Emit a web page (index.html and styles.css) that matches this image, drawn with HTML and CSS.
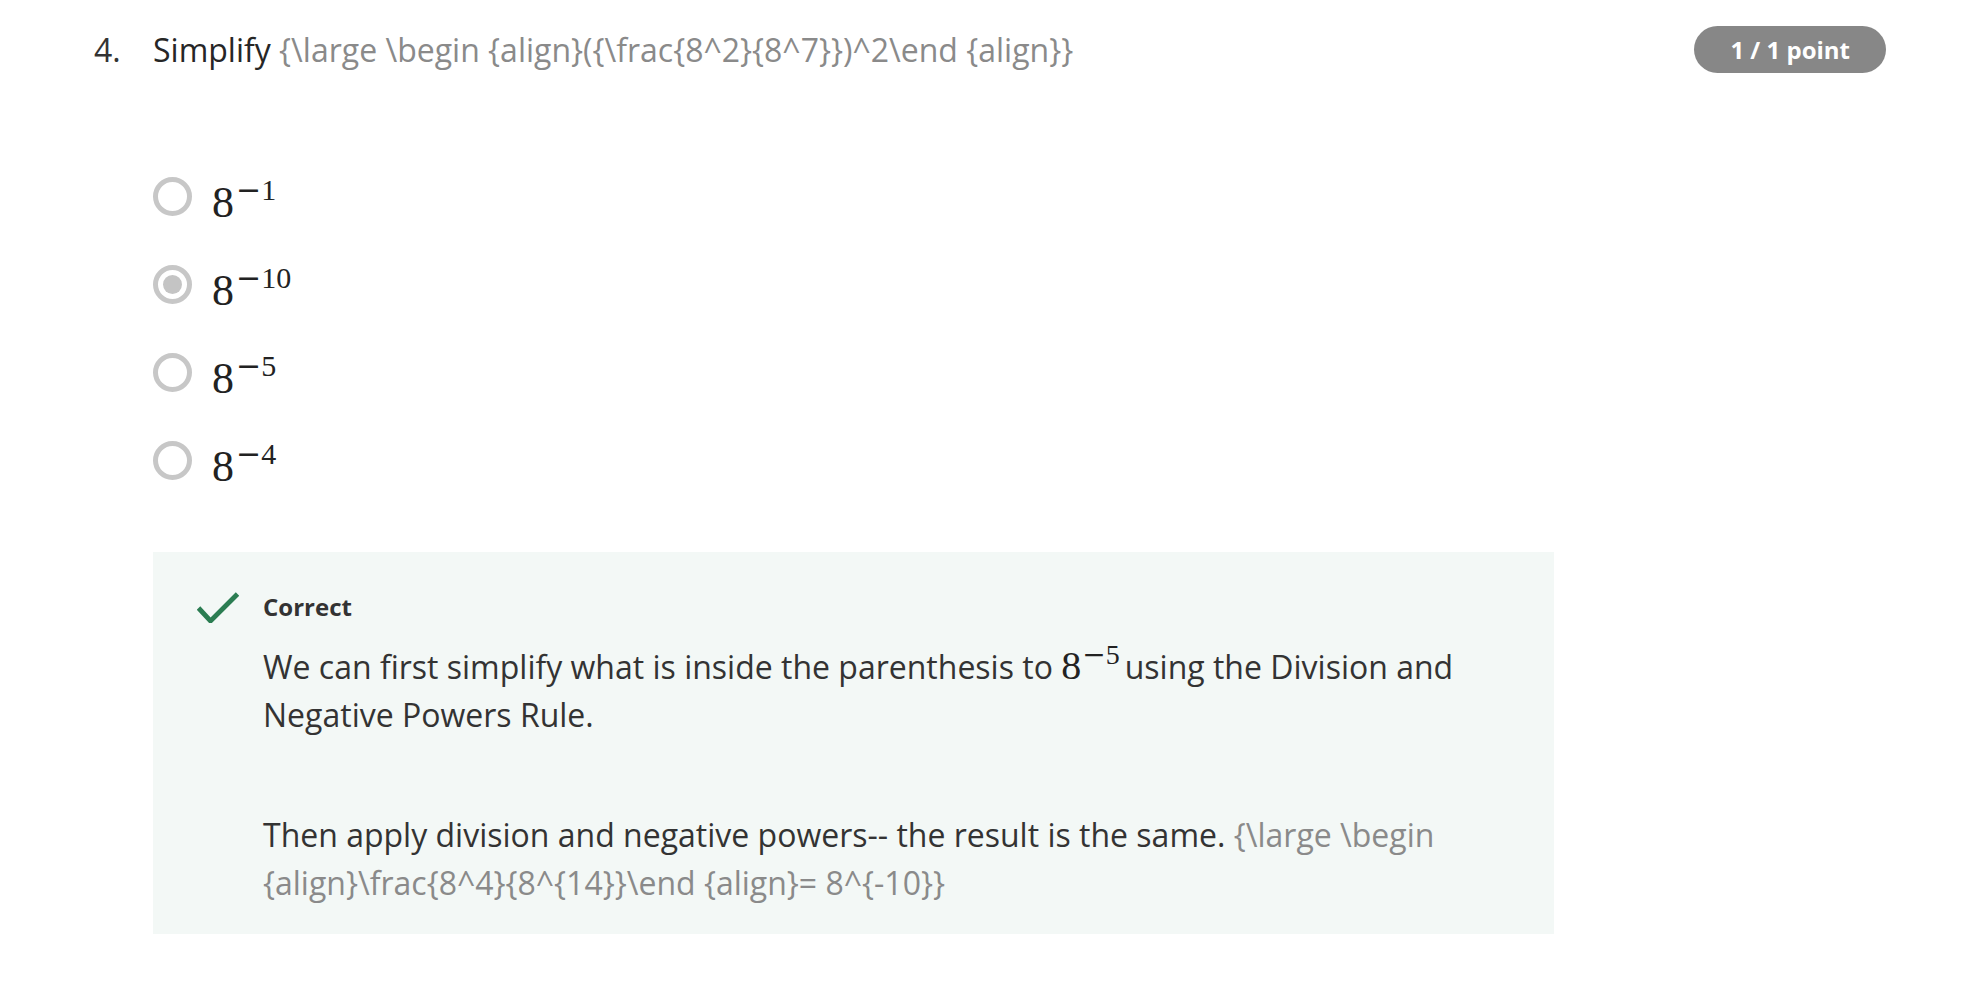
FILE: index.html
```html
<!DOCTYPE html>
<html lang="en">
<head>
<meta charset="utf-8">
<title>Quiz question 4</title>
<link rel="stylesheet" href="styles.css">
</head>
<body>
<div class="page">
  <div class="question">
    <div class="qnum">4.</div>
    <div class="qtitle">Simplify <span class="tex">{\large \begin {align}({\frac{8^2}{8^7}})^2\end {align}}</span></div>
    <div class="badge">1 / 1 point</div>
  </div>

  <div class="options">
    <div class="option"><span class="radio"></span><span class="math">8<span class="sup"><span class="minus">−</span>1</span></span></div>
    <div class="option"><span class="radio checked"></span><span class="math">8<span class="sup"><span class="minus">−</span>10</span></span></div>
    <div class="option"><span class="radio"></span><span class="math">8<span class="sup"><span class="minus">−</span>5</span></span></div>
    <div class="option"><span class="radio"></span><span class="math">8<span class="sup"><span class="minus">−</span>4</span></span></div>
  </div>

  <div class="feedback">
    <div class="fb-head">
      <svg class="check" width="42" height="31" viewBox="0 0 42 31"><path d="M1.5 16 L13.5 29 L40.5 2" fill="none" stroke="#2b7d52" stroke-width="4.8"/></svg>
      <span class="fb-title">Correct</span>
    </div>
    <div class="fb-body">
      <p>We can first simplify what is inside the parenthesis to <span class="imath">8<span class="isup"><span class="minus">−</span>5</span></span>using the Division and Negative Powers Rule.</p>
      <p>Then apply division and negative powers-- the result is the same. <span class="tex">{\large \begin {align}\frac{8^4}{8^{14}}\end {align}= 8^{-10}}</span></p>
    </div>
  </div>
</div>
</body>
</html>
```

FILE: styles.css
```css
body {
  margin: 0;
  background: #ffffff;
  font-family: "Open Sans", "Noto Sans", sans-serif;
  color: #333333;
}

.page {
  padding: 26px 92px 0 94px;
}

.question {
  display: flex;
  align-items: flex-start;
}

.qnum {
  width: 59px;
  flex: none;
  font-size: 32px;
  line-height: 48px;
  color: #333333;
}

.qtitle {
  flex: 1;
  font-size: 32px;
  line-height: 48px;
  color: #262626;
}

.tex {
  color: #8a8a8a;
}

.badge {
  flex: none;
  display: flex;
  align-items: center;
  height: 47px;
  padding: 0 36px;
  border-radius: 24px;
  background: #878787;
  color: #ffffff;
  font-size: 24px;
  font-weight: 700;
}

.options {
  margin-top: 78px;
  margin-left: 59px;
}

.option {
  display: flex;
  align-items: center;
  height: 88px;
}

.radio {
  flex: none;
  box-sizing: border-box;
  width: 39px;
  height: 39px;
  border: 5px solid #c7c7c7;
  border-radius: 50%;
  margin-right: 20px;
  display: flex;
  align-items: center;
  justify-content: center;
}

.radio.checked::after {
  content: "";
  width: 19px;
  height: 19px;
  border-radius: 50%;
  background: #c4c4c4;
}

.math {
  font-family: "Liberation Serif", "DejaVu Serif", serif;
  font-size: 44px;
  line-height: 44px;
  height: 44px;
  margin-top: 13px;
  color: #222222;
}

.sup {
  font-size: 30px;
  line-height: 0;
  vertical-align: 17px;
  margin-left: 2px;
}

.minus {
  font-family: "DejaVu Serif", "Liberation Serif", serif;
  font-weight: 300;
}

.feedback {
  margin-top: 48px;
  margin-left: 59px;
  width: 1401px;
  box-sizing: border-box;
  background: #f3f8f6;
  padding: 37px 48px 27px 44px;
}

.fb-head {
  display: flex;
  align-items: center;
  height: 36px;
}

.check {
  flex: none;
  margin-right: 24px;
}

.fb-title {
  font-size: 24px;
  font-weight: 700;
  line-height: 36px;
  color: #333333;
}

.fb-body {
  margin-top: 17px;
  padding-left: 66px;
  font-size: 32px;
  line-height: 48px;
  color: #333333;
}

.fb-body p {
  margin: 0;
}

.fb-body p + p {
  margin-top: 72px;
}

.imath {
  font-family: "Liberation Serif", "DejaVu Serif", serif;
  font-size: 40px;
  color: #222222;
}

.isup {
  font-size: 28px;
  line-height: 0;
  vertical-align: 15px;
  margin-left: 1px;
  margin-right: 5px;
}
```
